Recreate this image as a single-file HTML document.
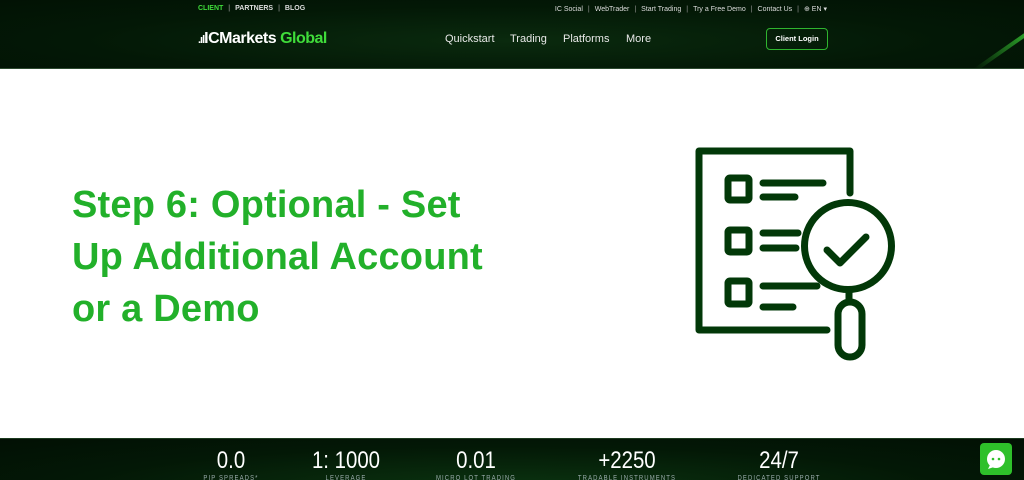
<!DOCTYPE html>
<html><head><meta charset="utf-8"><style>
*{margin:0;padding:0;box-sizing:border-box}
body{width:1024px;height:480px;overflow:hidden;background:#fff;font-family:"Liberation Sans",sans-serif;position:relative}
.hdr{position:absolute;left:0;top:0;width:1024px;height:69px;background:radial-gradient(ellipse at 50% 60%,#0a2a0e 0%,#031806 60%,#021204 100%);border-bottom:1px solid #2d4a30;overflow:hidden}
.top{position:absolute;top:5px;font-size:7px;font-weight:bold;color:#ddd;white-space:nowrap}
.top span{margin:0 5px;color:#aaa;font-weight:normal}
.topr{position:absolute;top:5px;right:197px;font-size:7px;color:#ddd;white-space:nowrap}
.topr span{margin:0 5px;color:#999}
.logo{position:absolute;left:198px;top:30px;font-size:16px;font-weight:bold;color:#fff;letter-spacing:-0.5px}
.logo b{color:#3fdc3a}
.nav{position:absolute;top:33px;font-size:11px;color:#e8e8e8}
.btn{position:absolute;left:766px;top:28px;width:62px;height:22px;border:1.5px solid #2fb52f;border-radius:4px;color:#fff;font-size:7.5px;font-weight:bold;text-align:center;line-height:19px}
.streak{position:absolute;left:975px;top:68px;width:90px;height:4px;background:linear-gradient(90deg,transparent,#3fe03a);transform:rotate(-35deg);transform-origin:left center}
h1{position:absolute;left:72px;top:179px;font-size:38px;line-height:52px;color:#22b02a;font-weight:bold;letter-spacing:0.2px}
.ftr{position:absolute;left:0;top:438px;width:1024px;height:42px;background:radial-gradient(ellipse at 50% 120%,#0b3410 0%,#031806 60%,#021004 100%);border-top:1px solid #1c3a1f;overflow:hidden}
.st{position:absolute;top:8px;text-align:center;color:#fff;font-size:24px;font-weight:300;transform:translateX(-50%) scaleX(0.85)}
.st small{display:block;font-size:7px;color:#9aa;letter-spacing:1.3px;margin-top:0}
.chat{position:absolute;left:980px;top:443px;width:32px;height:32px;background:#2ec02a;border-radius:4px}
</style></head><body>
<div class="hdr">
<div class="streak"></div>
<div class="top" style="left:198px"><span style="color:#3fdc3a;font-weight:bold;margin:0">CLIENT</span><span>|</span>PARTNERS<span>|</span>BLOG</div>
<div class="topr">IC Social<span>|</span>WebTrader<span>|</span>Start Trading<span>|</span>Try a Free Demo<span>|</span>Contact Us<span>|</span>⊕ EN ▾</div>
<div class="logo"><span style="font-size:11px;letter-spacing:-1px">.ıl</span>ICMarkets <b>Global</b></div>
<div class="nav" style="left:445px">Quickstart</div>
<div class="nav" style="left:510px">Trading</div>
<div class="nav" style="left:563px">Platforms</div>
<div class="nav" style="left:626px">More</div>
<div class="btn">Client Login</div>
</div>
<h1>Step 6: Optional - Set<br>Up Additional Account<br>or a Demo</h1>
<svg style="position:absolute;left:0;top:0" width="1024" height="480">
<g fill="none" stroke="#023808" stroke-width="7" stroke-linecap="round" stroke-linejoin="round">
<path d="M850 193 V151 H699 V330 H827"/>
<rect x="728" y="178" width="21" height="22" rx="2"/>
<rect x="728" y="230" width="21" height="22" rx="2"/>
<rect x="728" y="281" width="21" height="23" rx="2"/>
<path d="M763 183H823M763 197H795M763 233H798M763 248H796M763 286H817M763 307H793"/>
<circle cx="848" cy="246" r="43.5"/>
<path d="M827 250L840 263L866 237"/>
<path d="M849 290V299"/>
<rect x="838" y="302" width="24" height="55" rx="12"/>
</g></svg>
<div class="ftr">
<div class="st" style="left:231px">0.0<small>PIP SPREADS*</small></div>
<div class="st" style="left:346px">1: 1000<small>LEVERAGE</small></div>
<div class="st" style="left:476px">0.01<small>MICRO LOT TRADING</small></div>
<div class="st" style="left:627px">+2250<small>TRADABLE INSTRUMENTS</small></div>
<div class="st" style="left:779px">24/7<small>DEDICATED SUPPORT</small></div>
</div>
<div class="chat"><svg width="32" height="32"><circle cx="16" cy="16" r="9" fill="#fff"/><path d="M10 22 L8 26 L14 24Z" fill="#fff"/><circle cx="13" cy="16" r="1.3" fill="#2ec02a"/><circle cx="19" cy="16" r="1.3" fill="#2ec02a"/></svg></div>
</body></html>
